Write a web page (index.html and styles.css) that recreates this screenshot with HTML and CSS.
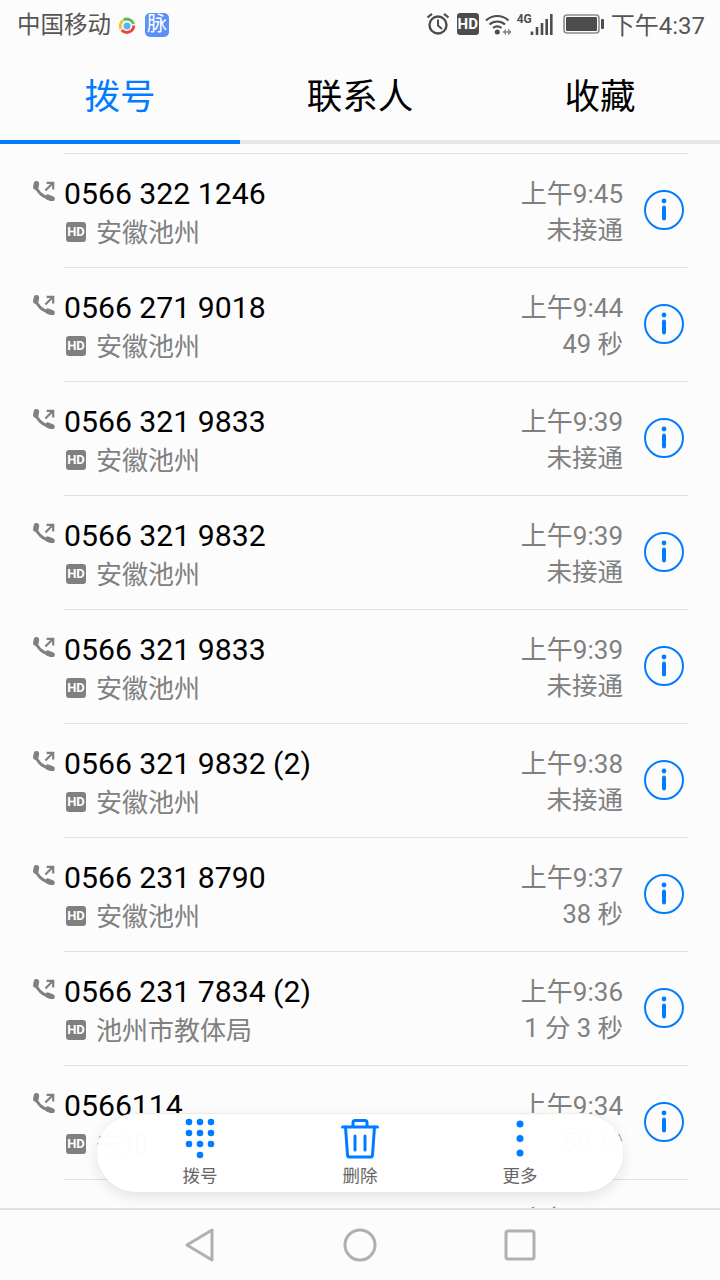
FILE: index.html
```html
<!DOCTYPE html>
<html lang="zh-CN">
<head>
    <meta charset="UTF-8">
    <meta name="viewport" content="width=device-width, initial-scale=1.0">
    <title>拨号</title>
    <link rel="stylesheet" href="styles.css">
</head>
<body>
    <svg class="defs" width="0" height="0">
        <symbol id="out" viewBox="0 0 22 20">
            <path d="M2.600 4.200C3.600 10 8.600 15.600 16.800 17.400" fill="none" stroke="#808080" stroke-width="3"/>
            <path d="M3.400 2.800L2.800 6.200M15 16.200L19 17.800" fill="none" stroke="#808080" stroke-width="5.500" stroke-linecap="round"/>
            <path d="M12.400 9.600L19.600 2.200M13.600 1.800H20.200V8.400" fill="none" stroke="#808080" stroke-width="2.200"/>
        </symbol>
        <symbol id="info" viewBox="0 0 40 40">
            <circle cx="20" cy="20" r="19" fill="none" stroke="#007dff" stroke-width="2"/>
            <circle cx="20" cy="11" r="2.400" fill="#007dff"/>
            <path d="M20 17.500V28.500" stroke="#007dff" stroke-width="4" stroke-linecap="round"/>
        </symbol>
    </svg>

    <div class="status">
        <div class="status-left">
            <span class="carrier">中国移动</span>
            <svg class="app-ring" width="18" height="18" viewBox="0 0 18 18">
                <path d="M3 12A7 7 0 0 1 5 3.500" fill="none" stroke="#f2c230" stroke-width="3"/>
                <path d="M5.500 3A7 7 0 0 1 15.600 7" fill="none" stroke="#62b85a" stroke-width="3"/>
                <path d="M15.800 8.500A7 7 0 0 1 3.600 13" fill="none" stroke="#e8483f" stroke-width="3"/>
                <circle cx="9" cy="9" r="3.500" fill="#55b4e8"/>
            </svg>
            <span class="app-badge">脉</span>
        </div>
        <div class="status-right">
            <svg width="24" height="24" viewBox="0 0 24 24">
                <circle cx="12" cy="13" r="8.500" fill="none" stroke="#4d4d4d" stroke-width="2.400"/>
                <path d="M12 7.500V13.500L16 17" fill="none" stroke="#4d4d4d" stroke-width="2"/>
                <path d="M1.500 5.500L6 1.800M22.500 5.500L18 1.800" stroke="#4d4d4d" stroke-width="2.200"/>
            </svg>
            <span class="hd-dark">HD</span>
            <svg class="wifi" width="27" height="24" viewBox="0 0 27 24">
                <path d="M1 8.500C7.500 2.500 17 2.500 23.500 8.500M4.500 12.500C9 8.500 15.500 8.500 20 12.500M8 16C10.500 14 14 14 16.500 16" fill="none" stroke="#4d4d4d" stroke-width="2.200"/>
                <circle cx="12.300" cy="20" r="2.500" fill="#4d4d4d"/>
                <path d="M18 20H26" stroke="#8a8a8a" stroke-width="1.500"/>
                <path d="M21 16.500V23.500L18 20ZM23 16.500V23.500L26.500 20Z" fill="#8a8a8a"/>
            </svg>
            <span class="net">4G</span>
            <svg class="bars" width="23" height="24" viewBox="0 0 23 24">
                <path d="M2 19.500V23M7 15V23M12 11V23M16.700 7V23M21.300 2V23" stroke="#4d4d4d" stroke-width="2.600"/>
            </svg>
            <svg class="battery" width="41" height="20" viewBox="0 0 41 20">
                <rect x="1" y="1" width="35" height="18" rx="3" fill="none" stroke="#8c8c8c" stroke-width="1.600"/>
                <rect x="3" y="3" width="31" height="14" rx="1" fill="#4d4d4d"/>
                <rect x="38" y="5" width="3" height="10" rx="1" fill="#4d4d4d"/>
            </svg>
            <span class="clock">下午4:37</span>
        </div>
    </div>

    <div class="tabs">
        <div class="tab active">拨号</div>
        <div class="tab">联系人</div>
        <div class="tab">收藏</div>
    </div>

    <div class="list">
        <div class="rows">
            <div class="row">
                <svg class="out"><use href="#out"/></svg>
                <div class="row-body">
                    <div class="who"><div class="num">0566 322 1246</div><div class="loc"><span class="hd">HD</span>安徽池州</div></div>
                    <div class="when"><div class="time">上午9:45</div><div class="dur">未接通</div></div>
                    <svg class="info"><use href="#info"/></svg>
                </div>
            </div>
            <div class="row">
                <svg class="out"><use href="#out"/></svg>
                <div class="row-body">
                    <div class="who"><div class="num">0566 271 9018</div><div class="loc"><span class="hd">HD</span>安徽池州</div></div>
                    <div class="when"><div class="time">上午9:44</div><div class="dur">49 秒</div></div>
                    <svg class="info"><use href="#info"/></svg>
                </div>
            </div>
            <div class="row">
                <svg class="out"><use href="#out"/></svg>
                <div class="row-body">
                    <div class="who"><div class="num">0566 321 9833</div><div class="loc"><span class="hd">HD</span>安徽池州</div></div>
                    <div class="when"><div class="time">上午9:39</div><div class="dur">未接通</div></div>
                    <svg class="info"><use href="#info"/></svg>
                </div>
            </div>
            <div class="row">
                <svg class="out"><use href="#out"/></svg>
                <div class="row-body">
                    <div class="who"><div class="num">0566 321 9832</div><div class="loc"><span class="hd">HD</span>安徽池州</div></div>
                    <div class="when"><div class="time">上午9:39</div><div class="dur">未接通</div></div>
                    <svg class="info"><use href="#info"/></svg>
                </div>
            </div>
            <div class="row">
                <svg class="out"><use href="#out"/></svg>
                <div class="row-body">
                    <div class="who"><div class="num">0566 321 9833</div><div class="loc"><span class="hd">HD</span>安徽池州</div></div>
                    <div class="when"><div class="time">上午9:39</div><div class="dur">未接通</div></div>
                    <svg class="info"><use href="#info"/></svg>
                </div>
            </div>
            <div class="row">
                <svg class="out"><use href="#out"/></svg>
                <div class="row-body">
                    <div class="who"><div class="num">0566 321 9832 (2)</div><div class="loc"><span class="hd">HD</span>安徽池州</div></div>
                    <div class="when"><div class="time">上午9:38</div><div class="dur">未接通</div></div>
                    <svg class="info"><use href="#info"/></svg>
                </div>
            </div>
            <div class="row">
                <svg class="out"><use href="#out"/></svg>
                <div class="row-body">
                    <div class="who"><div class="num">0566 231 8790</div><div class="loc"><span class="hd">HD</span>安徽池州</div></div>
                    <div class="when"><div class="time">上午9:37</div><div class="dur">38 秒</div></div>
                    <svg class="info"><use href="#info"/></svg>
                </div>
            </div>
            <div class="row">
                <svg class="out"><use href="#out"/></svg>
                <div class="row-body">
                    <div class="who"><div class="num">0566 231 7834 (2)</div><div class="loc"><span class="hd">HD</span>池州市教体局</div></div>
                    <div class="when"><div class="time">上午9:36</div><div class="dur">1 分 3 秒</div></div>
                    <svg class="info"><use href="#info"/></svg>
                </div>
            </div>
            <div class="row">
                <svg class="out"><use href="#out"/></svg>
                <div class="row-body">
                    <div class="who"><div class="num">0566114</div><div class="loc"><span class="hd">HD</span>未知</div></div>
                    <div class="when"><div class="time">上午9:34</div><div class="dur">59 秒</div></div>
                    <svg class="info"><use href="#info"/></svg>
                </div>
            </div>
            <div class="row">
                <div class="row-body last">
                    <div class="who"><div class="num">0566</div></div>
                    <div class="when"><div class="time">上午9:30</div></div>
                </div>
            </div>
        </div>
    </div>

    <div class="pill">
        <div class="pill-item">
            <svg width="34" height="44" viewBox="0 0 34 44">
                <g fill="#007dff">
                    <circle cx="6" cy="4" r="3.300"/><circle cx="17" cy="4" r="3.300"/><circle cx="28" cy="4" r="3.300"/>
                    <circle cx="6" cy="15" r="3.300"/><circle cx="17" cy="15" r="3.300"/><circle cx="28" cy="15" r="3.300"/>
                    <circle cx="6" cy="26" r="3.300"/><circle cx="17" cy="26" r="3.300"/><circle cx="28" cy="26" r="3.300"/>
                    <circle cx="17" cy="37" r="3.300"/>
                </g>
            </svg>
            <span>拨号</span>
        </div>
        <div class="pill-item">
            <svg width="38" height="44" viewBox="0 0 38 44">
                <g fill="none" stroke="#007dff" stroke-width="3" stroke-linejoin="round" stroke-linecap="round">
                    <path d="M1.500 9H36.500"/>
                    <path d="M12 8V4.500Q12 2.500 14 2.500H24Q26 2.500 26 4.500V8"/>
                    <path d="M4.500 9L6.500 37Q6.700 39 8.700 39H29.300Q31.300 39 31.500 37L33.500 9"/>
                    <path d="M14 18V32M24 18V32"/>
                </g>
            </svg>
            <span>删除</span>
        </div>
        <div class="pill-item">
            <svg width="34" height="44" viewBox="0 0 34 44">
                <g fill="#007dff">
                    <circle cx="17" cy="6" r="3.500"/><circle cx="17" cy="20.500" r="3.500"/><circle cx="17" cy="35" r="3.500"/>
                </g>
            </svg>
            <span>更多</span>
        </div>
    </div>

    <div class="nav">
        <div class="nav-item">
            <svg width="32" height="36" viewBox="0 0 32 36">
                <path d="M28 3V33L3 18Z" fill="none" stroke="#b0b0b0" stroke-width="3" stroke-linejoin="round"/>
            </svg>
        </div>
        <div class="nav-item">
            <svg width="34" height="34" viewBox="0 0 34 34">
                <circle cx="17" cy="17" r="15" fill="none" stroke="#b0b0b0" stroke-width="3"/>
            </svg>
        </div>
        <div class="nav-item">
            <svg width="32" height="32" viewBox="0 0 32 32">
                <rect x="2" y="2" width="28" height="28" rx="2" fill="none" stroke="#b0b0b0" stroke-width="3"/>
            </svg>
        </div>
    </div>
</body>
</html>
```

FILE: styles.css
```css
* {
    box-sizing: border-box;
}

body {
    margin: 0;
    width: 720px;
    height: 1280px;
    overflow: hidden;
    position: relative;
    display: flex;
    flex-direction: column;
    background-color: #fcfcfc;
    font-family: Roboto, "Noto Sans CJK SC", sans-serif;
}

.defs {
    position: absolute;
}

svg {
    display: block;
    flex-shrink: 0;
}

/* status bar */
.status {
    height: 48px;
    padding: 0 15px 0 17px;
    display: flex;
    justify-content: space-between;
    align-items: center;
    color: #555;
    font-size: 24px;
}

.status-left,
.status-right {
    display: flex;
    align-items: center;
}

.carrier {
    padding-bottom: 2px;
    font-size: 23.5px;
}

.app-ring {
    margin: 4px 0 0 7px;
}

.app-badge {
    margin: 2px 0 0 9px;
    width: 24px;
    height: 24px;
    border-radius: 5px;
    background-color: #5b8ff9;
    color: #fff;
    font-size: 20px;
    line-height: 23px;
    text-align: center;
}

.hd-dark {
    margin-left: 7px;
    width: 22px;
    height: 22px;
    border-radius: 3px;
    background-color: #4d4d4d;
    color: #fff;
    font-size: 15px;
    font-weight: 700;
    line-height: 22px;
    text-align: center;
}

.wifi {
    margin-left: 6px;
}

.net {
    width: 13px;
    margin-left: 5px;
    margin-bottom: 10px;
    font-size: 12px;
    font-weight: 700;
    line-height: 12px;
    color: #4d4d4d;
    white-space: nowrap;
}

.battery {
    margin-left: 10px;
}

.clock {
    margin-left: 7px;
    padding-bottom: 2px;
}

/* tabs */
.tabs {
    height: 96px;
    display: flex;
}

.tab {
    flex: 1;
    display: flex;
    justify-content: center;
    align-items: center;
    padding-bottom: 2px;
    border-bottom: 4px solid #e6e6e6;
    color: #000;
    font-size: 35.5px;
}

.tab.active {
    color: #007dff;
    border-bottom-color: #007dff;
}

/* call list */
.list {
    flex: 1;
    overflow: hidden;
    padding: 9px 32px 0;
}

.rows {
    border-top: 1px solid transparent;
}

.row {
    display: flex;
    height: 114px;
}

.out {
    width: 22px;
    height: 20px;
    margin: 27px 9px 0 1px;
}

.row-body {
    flex: 1;
    display: flex;
    align-items: center;
    border-top: 1px solid #e2e2e2;
    margin-top: -1px;
    height: 115px;
}

.row-body.last {
    margin-left: 32px;
}

.who {
    flex: 1;
    align-self: flex-start;
    padding-top: 20px;
}

.num {
    color: #000;
    font-size: 30.2px;
    line-height: 40px;
}

.loc {
    display: flex;
    align-items: center;
    color: #808080;
    font-size: 26px;
    line-height: 38px;
}

.hd {
    width: 20px;
    height: 20px;
    margin: 0 10px 2px 2px;
    border-radius: 3px;
    background-color: #808080;
    color: #fff;
    font-size: 13px;
    font-weight: 700;
    line-height: 20px;
    text-align: center;
}

.when {
    align-self: flex-start;
    padding-top: 22px;
    color: #808080;
    font-size: 26px;
    line-height: 36px;
    text-align: right;
}

.dur {
    font-size: 25.5px;
}

.last .when {
    margin-right: 65px;
}

.info {
    width: 40px;
    height: 40px;
    margin: 0 4px 2px 21px;
}

/* floating actions */
.pill {
    position: absolute;
    left: 97px;
    top: 1113px;
    width: 526px;
    height: 79px;
    padding: 0 23px;
    display: flex;
    border-radius: 40px;
    border-top: 1px solid #ececec;
    background-color: rgba(255, 255, 255, 0.975);
    box-shadow: 0 5px 14px rgba(0, 0, 0, 0.1);
}

.pill-item {
    width: 160px;
    padding-top: 4px;
    display: flex;
    flex-direction: column;
    align-items: center;
    color: #666;
    font-size: 17.5px;
    line-height: 24px;
}

.pill-item span {
    margin-top: 2px;
}

/* navigation bar */
.nav {
    height: 72px;
    padding: 0 120px;
    display: flex;
    border-top: 2px solid #e0e0e0;
    background-color: #fcfcfc;
}

.nav-item {
    width: 160px;
    display: flex;
    justify-content: center;
    align-items: center;
}
```
